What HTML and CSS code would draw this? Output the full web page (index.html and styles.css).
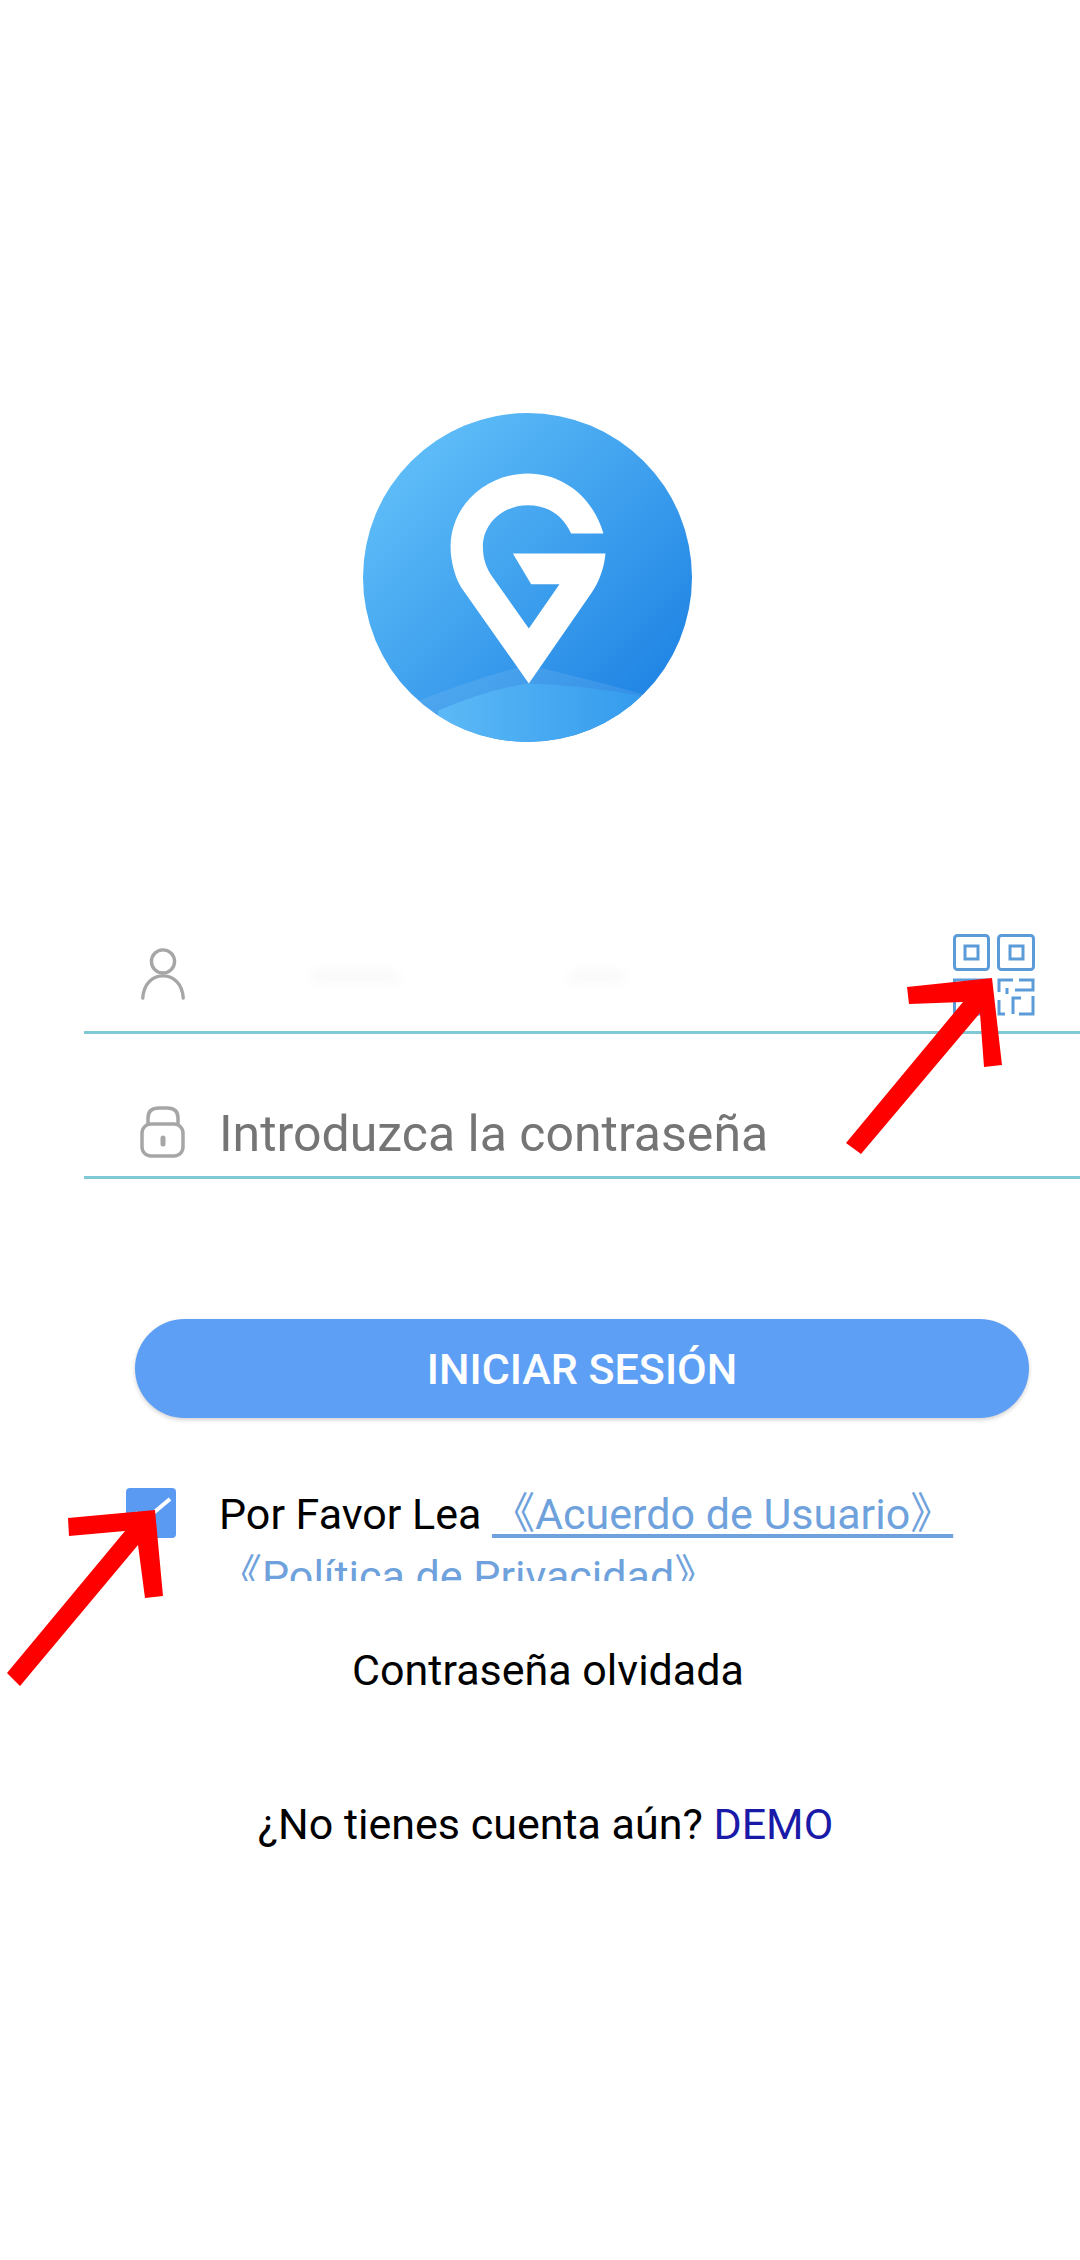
FILE: index.html
```html
<!DOCTYPE html>
<html>

<head>
	<meta charset="UTF-8">
	<title>Iniciar sesión</title>
	<link rel="stylesheet" href="styles.css">
</head>

<body>
	<div class="page">
		<svg class="logo" viewBox="70 68 988 988">
			<defs>
				<linearGradient id="disc" x1="0.15" y1="0.1" x2="0.9" y2="0.85">
					<stop offset="0" stop-color="#5fbdf8" />
					<stop offset="1" stop-color="#1f84e4" />
				</linearGradient>
				<linearGradient id="hill" x1="0" y1="0" x2="1" y2="0">
					<stop offset="0" stop-color="#5cb9f6" />
					<stop offset="1" stop-color="#349bed" />
				</linearGradient>
				<clipPath id="round">
					<circle cx="564" cy="562" r="494" />
				</clipPath>
			</defs>
			<circle cx="564" cy="562" r="494" fill="url(#disc)" />
			<g clip-path="url(#round)">
				<path d="M230 935 Q400 865 565 825 Q740 865 920 915 L920 1060 L230 1060 Z" fill="#fff" fill-opacity="0.09" />
				<path d="M295 962 Q440 900 565 880 Q740 885 905 918 L905 1060 L295 1060 Z" fill="url(#hill)" />
			</g>
			<path fill="#fff" d="M568 880 L365 592 C345 560 333 510 333 470 C333 345 440 250 565 250 C670 250 760 320 792 430 L695 430 C670 375 625 345 565 345 C490 345 430 400 430 470 C430 505 440 535 460 562 L568 715 L660 582 L575 582 L520 490 L798 490 C795 530 780 575 755 610 Z" />
		</svg>

		<div class="fields">
			<div class="field field-user">
				<svg class="field-icon icon-person" viewBox="0 0 52 56">
					<circle cx="26" cy="15" r="12" />
					<path d="M5 53 C6 38 15 30 26 30 C37 30 46 38 47 53" />
				</svg>
				<span class="smudge smudge-a"></span>
				<span class="smudge smudge-b"></span>
				<svg class="qr" viewBox="0 0 82 82">
					<rect x="1.5" y="1.5" width="34" height="34" rx="3" />
					<rect x="12" y="12" width="13" height="13" />
					<rect x="45.5" y="1.5" width="35" height="34" rx="3" />
					<rect x="57" y="12" width="13" height="13" />
					<path d="M1.5 46 H34 V80 H1.5 Z" />
					<path d="M46 58 V46 H60 M66 46 H80 V56 H62 M54 54 V60 M46 66 V80 H52 M60 80 V64 H68 M80 62 V80 H66" />
				</svg>
			</div>
			<div class="field field-pass">
				<svg class="field-icon" viewBox="0 0 52 54">
					<path d="M11 19 V13 C11 6 15 3 22 3 H30 C37 3 41 6 41 13 V19" />
					<rect x="5" y="19" width="41" height="32" rx="9" />
					<path class="keyhole" d="M26 33 V39" />
				</svg>
				<span class="placeholder">Introduzca la contraseña</span>
			</div>
		</div>

		<div class="login-btn">INICIAR SESIÓN</div>

		<div class="terms">
			<div class="checkbox">
				<svg viewBox="0 0 50 50">
					<path d="M9 25 L19 32 L44 11" />
				</svg>
			</div>
			<p class="terms-text">Por Favor Lea <a class="terms-link">《Acuerdo de Usuario》</a> <a class="terms-link">《Política de Privacidad》</a></p>
		</div>

		<div class="forgot">Contraseña olvidada</div>
		<div class="signup">¿No tienes cuenta aún? <span class="demo">DEMO</span></div>

		<svg class="arrows" viewBox="0 0 1080 2260">
			<polygon points="992,978 907,987 909,1004 963,1002 846,1143 861,1154 980,1013 984,1067 1002,1065" />
			<polygon points="155,1510 68,1518 69,1536 125,1531 7,1673 20,1686 138,1545 145,1598 163,1596" />
		</svg>
	</div>
</body>

</html>
```

FILE: styles.css
```css
html,
body {
	margin: 0;
	padding: 0;
	background-color: #fff;
}

.page {
	position: relative;
	width: 1080px;
	height: 2260px;
	overflow: hidden;
	font-family: Roboto, "Noto Sans CJK SC", sans-serif;
	font-size: 43px;
	color: #000;
}

.logo {
	display: block;
	width: 329px;
	height: 329px;
	margin: 413px 0 0 363px;
}

.fields {
	margin: 180px 0 0 84px;
}

.field {
	display: flex;
	box-sizing: border-box;
	padding-left: 53px;
	border-bottom: 3px solid #7fc8d6;
}

.field-user {
	height: 112px;
	align-items: center;
}

.field-pass {
	height: 145px;
	align-items: flex-end;
	padding-bottom: 17px;
}

.field-icon {
	display: block;
	flex: none;
	width: 52px;
	height: 54px;
	fill: none;
	stroke: #a6a6a6;
	stroke-width: 3.5;
	stroke-linecap: round;
}

.icon-person {
	margin-top: -6px;
}

.keyhole {
	stroke-width: 5;
}

.placeholder {
	margin-left: 30px;
	font-size: 50px;
	line-height: 50px;
	color: #757575;
}

.smudge {
	height: 14px;
	background-color: #fafafa;
	filter: blur(5px);
}

.smudge-a {
	width: 88px;
	margin-left: 122px;
}

.smudge-b {
	width: 55px;
	margin-left: 170px;
}

.qr {
	display: block;
	flex: none;
	width: 82px;
	height: 82px;
	margin-top: -3px;
	margin-left: auto;
	margin-right: 45px;
	fill: none;
	stroke: #5b9bd8;
	stroke-width: 3;
}

.login-btn {
	box-sizing: border-box;
	width: 894px;
	height: 99px;
	margin: 140px 0 0 135px;
	border-radius: 50px;
	background-color: #5e9ff6;
	box-shadow: 0 2px 4px rgba(0, 0, 0, 0.18);
	color: #fff;
	font-size: 43px;
	font-weight: 500;
	line-height: 101px;
	text-align: center;
}

.terms {
	display: flex;
	align-items: flex-start;
	margin: 70px 0 0 126px;
}

.checkbox {
	flex: none;
	width: 50px;
	height: 50px;
	border-radius: 4px;
	background-color: #5b9af2;
}

.checkbox svg {
	display: block;
	fill: none;
	stroke: #fff;
	stroke-width: 4;
}

.terms-text {
	width: 790px;
	height: 98px;
	margin: -5px 0 0 43px;
	overflow: hidden;
	line-height: 62px;
}

.terms-link {
	color: #6fa2dc;
	text-decoration: underline;
	text-underline-offset: 5px;
}

.forgot {
	margin-top: 59px;
	padding-left: 16px;
	line-height: 60px;
	text-align: center;
}

.signup {
	margin-top: 94px;
	padding-left: 11px;
	line-height: 60px;
	text-align: center;
}

.demo {
	color: #1a1aa8;
}

.arrows {
	position: absolute;
	top: 0;
	left: 0;
	width: 1080px;
	height: 2260px;
	fill: #fe0000;
}
```
